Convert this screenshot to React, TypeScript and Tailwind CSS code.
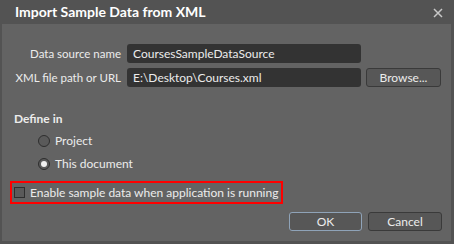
import React from "react";

export default function App() {
  const font = { fontFamily: 'Lato, "Liberation Sans", sans-serif' };
  return (
    <div className="w-[454px] h-[244px] bg-[#535353] flex flex-col text-[#ececec] whitespace-nowrap" style={font}>
      <div className="h-[24px] shrink-0 flex items-center justify-between pl-[15px] pr-[11px]">
        <span className="text-[14px] font-bold text-white leading-[16px]">Import Sample Data from XML</span>
        <svg width="10" height="10" viewBox="0 0 10 10" className="mt-[1px]">
          <path d="M1 1 L9 9 M9 1 L1 9" stroke="#c8c8c8" strokeWidth="1.5" />
        </svg>
      </div>
      <div className="flex-1 ml-[2px] mr-[3px] mb-[3px] bg-[#636363] flex flex-col pl-[12px] text-[12px] leading-[16px]">
        <div className="grid grid-cols-[107px_234px_74px] gap-x-[6px] gap-y-[5px] items-center mt-[20px]">
          <span className="text-right text-[11.5px]">Data source name</span>
          <div className="h-[19px] bg-[#333333] rounded-[3px] flex items-center pl-[6px]">CoursesSampleDataSource</div>
          <div />
          <span className="text-right text-[11.5px]">XML file path or URL</span>
          <div className="h-[19px] bg-[#333333] rounded-[3px] flex items-center pl-[6px]">E:\Desktop\Courses.xml</div>
          <div className="h-[19px] -ml-[1px] bg-[#575757] border border-[#3a3a3a] rounded-[3px] flex items-center justify-center">Browse...</div>
        </div>
        <div className="mt-[24px] font-bold">Define in</div>
        <div className="flex flex-col gap-[9px] mt-[7px] pl-[24px]">
          <div className="flex items-center gap-[5px] h-[14px]">
            <span className="shrink-0 w-[12px] h-[12px] rounded-full border border-[#2e2e2e] bg-[#5a5a5a]" />
            <span>Project</span>
          </div>
          <div className="flex items-center gap-[5px] h-[14px]">
            <span className="shrink-0 w-[12px] h-[12px] rounded-full border border-[#2e2e2e] bg-[#5a5a5a] flex items-center justify-center">
              <span className="w-[6px] h-[6px] rounded-full bg-[#f0f0f0]" />
            </span>
            <span>This document</span>
          </div>
        </div>
        <div className="mt-[10px] -ml-[4px] w-[273px] h-[23px] border-2 border-[#ff0000] flex items-center pl-[2px] gap-[5px]">
          <span className="shrink-0 w-[11px] h-[11px] border border-[#2e2e2e] bg-[#5a5a5a]" />
          <span>Enable sample data when application is running</span>
        </div>
        <div className="flex justify-end gap-[6px] mt-[8px] pr-[9px]">
          <div className="w-[73px] h-[19px] rounded-[3px] border border-[#8fa3b8] bg-[#575757] flex items-center justify-center">OK</div>
          <div className="w-[74px] h-[19px] rounded-[3px] border border-[#3a3a3a] bg-[#575757] flex items-center justify-center">Cancel</div>
        </div>
      </div>
    </div>
  );
}
